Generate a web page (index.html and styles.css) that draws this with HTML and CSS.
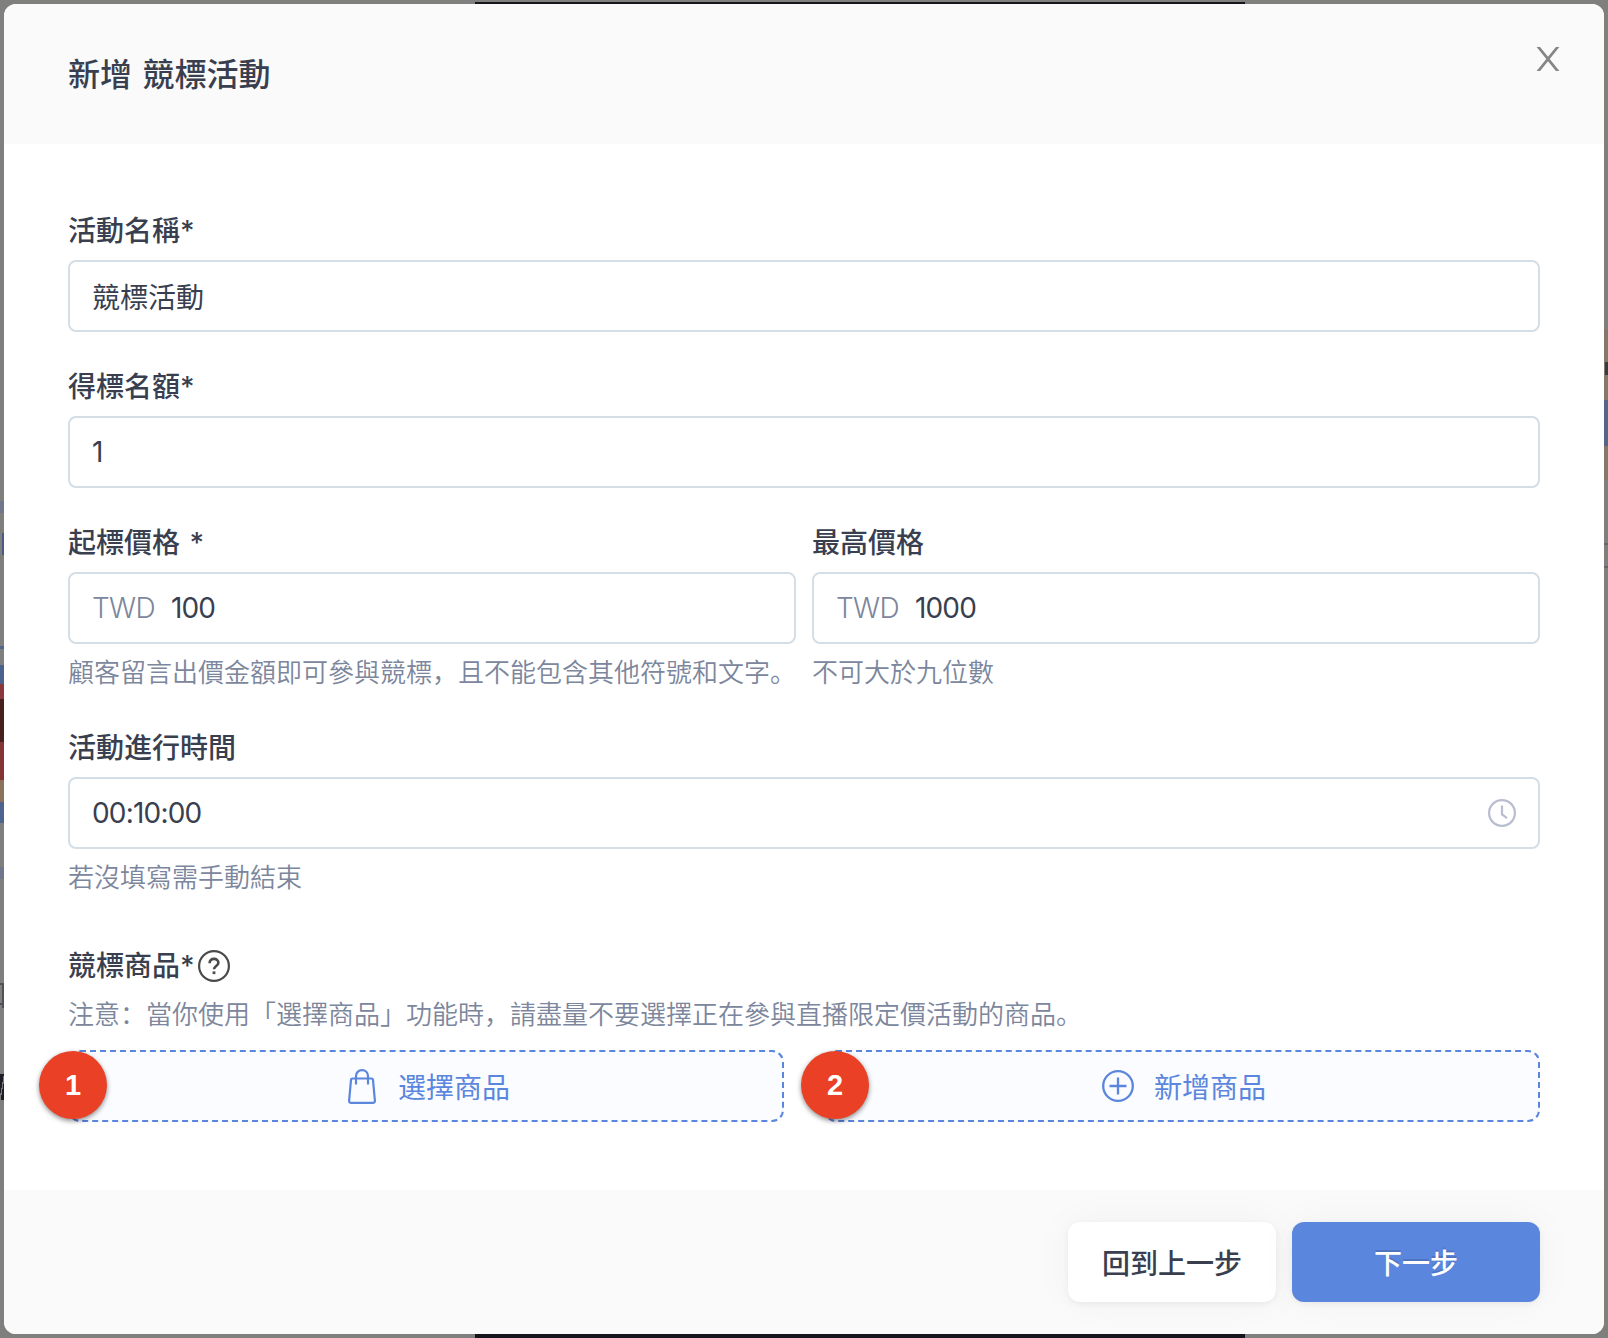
FILE: index.html
```
<!DOCTYPE html>
<html lang="zh-Hans">
<head>
  <meta charset="UTF-8" />
  <meta name="viewport" content="width=device-width, initial-scale=1" />
  <title>新增 競標活動</title>
  <link rel="stylesheet" href="styles.css">
</head>
<body>
  <div class="backdrop" aria-hidden="true"></div>

  <main class="modal" role="dialog" aria-labelledby="modal-title">
    <header class="modal-header">
      <h1 id="modal-title">新增 競標活動</h1>
      <button class="close" aria-label="關閉">
        <svg width="24" height="26" viewBox="0 0 24 26" fill="#868686">
          <path d="M.6 1h3.500L12 10.700 19.900 1h3.500L13.700 13l9.700 12h-3.500L12 15.300 4.100 25H.6l9.700-12z" />
        </svg>
      </button>
    </header>

    <form class="modal-body">
      <div class="field">
        <label for="name">活動名稱*</label>
        <div class="control"><input id="name" type="text" value="競標活動" /></div>
      </div>

      <div class="field">
        <label for="quota">得標名額*</label>
        <div class="control"><input id="quota" class="number" type="text" value="1" /></div>
      </div>

      <div class="row">
        <div class="field">
          <label for="start-price">起標價格 *</label>
          <div class="control">
            <span class="prefix">TWD</span>
            <input id="start-price" class="number" type="text" value="100" />
          </div>
          <p class="hint">顧客留言出價金額即可參與競標，且不能包含其他符號和文字。</p>
        </div>
        <div class="field">
          <label for="max-price">最高價格</label>
          <div class="control">
            <span class="prefix">TWD</span>
            <input id="max-price" class="number" type="text" value="1000" />
          </div>
          <p class="hint">不可大於九位數</p>
        </div>
      </div>

      <div class="field">
        <label for="duration">活動進行時間</label>
        <div class="control">
          <input id="duration" class="number" type="text" value="00:10:00" />
          <svg class="clock" width="28" height="28" viewBox="0 0 28 28" fill="none" stroke="#b8bdcf" stroke-width="2.2">
            <circle cx="14" cy="14" r="12.9" />
            <path d="M14 6.500v9l5 3.700" />
          </svg>
        </div>
        <p class="hint">若沒填寫需手動結束</p>
      </div>

      <section class="products">
        <div class="products-title">
          <h2>競標商品*</h2>
          <svg width="32" height="32" viewBox="0 0 32 32" fill="none" stroke="#4a4a4a" stroke-width="2.2">
            <circle cx="16" cy="16" r="14.900" />
            <path d="M11.600 13.200c0-2.700 1.900-4.300 4.400-4.300s4.400 1.600 4.400 3.900c0 3.300-4.400 3.100-4.400 6.500" stroke-width="2.600" />
            <path d="M16 21.400v2.700" stroke-width="2.800" />
          </svg>
        </div>
        <p class="note">注意：當你使用「選擇商品」功能時，請盡量不要選擇正在參與直播限定價活動的商品。</p>

        <div class="product-actions">
          <button class="dashed dashed-select" type="button">
            <svg width="28" height="35" viewBox="0 0 28 35" fill="none" stroke="#5b86dd" stroke-width="2.200" stroke-linejoin="round">
              <path d="M4.500 9.500h19a1.500 1.500 0 0 1 1.500 1.400l1.900 20.900a1.900 1.900 0 0 1-1.900 2.100H3a1.900 1.900 0 0 1-1.900-2.100L3 10.900a1.500 1.500 0 0 1 1.500-1.400z" />
              <path d="M8 15.500V7.100C8 3.700 10.500 1.200 14 1.200s6 2.500 6 5.900v8.400" />
            </svg>
            <span>選擇商品</span>
            <i class="badge">1</i>
          </button>
          <button class="dashed dashed-add" type="button">
            <svg width="32" height="32" viewBox="0 0 32 32" fill="none" stroke="#5b86dd" stroke-width="2.300">
              <circle cx="16" cy="16" r="14.800" />
              <path d="M16 7.500v17M7.500 16h17" />
            </svg>
            <span>新增商品</span>
            <i class="badge">2</i>
          </button>
        </div>
      </section>
    </form>

    <footer class="modal-footer">
      <button class="btn btn-back">回到上一步</button>
      <button class="btn btn-next">下一步</button>
    </footer>
  </main>
</body>
</html>
```
FILE: styles.css
```
*, *::before, *::after {
  box-sizing: border-box;
}

body {
  margin: 0;
  padding: 4px;
  background: #7f7f7f;
  font-family: Inter, "Noto Sans CJK SC", sans-serif;
  font-size: 28px;
  color: #393f4f;
}

h1, h2, p {
  margin: 0;
}

button, input {
  font: inherit;
  color: inherit;
  border: none;
  background: none;
  padding: 0;
}

/* dimmed page behind the dialog */
.backdrop {
  position: absolute;
  inset: 0;
  z-index: -1;
  background:
    linear-gradient(#15151b, #15151b) 475px 2px / 770px 1336px no-repeat,
    /* left edge */
    linear-gradient(#70768c 0 0) 0 501px / 4px 12px no-repeat,
    linear-gradient(#48598a 0 0) 2px 533px / 2px 22px no-repeat,
    linear-gradient(#53658f 0 0) 0 646px / 4px 3px no-repeat,
    linear-gradient(#4d618e 0 19px, #8a383b 19px 34px, #46201d 34px 77px, #853436 77px 115px, #8b725d 115px 137px, #4f6390 137px 158px) 0 665px / 4px 158px no-repeat,
    linear-gradient(#70768c 0 0) 0 867px / 4px 12px no-repeat,
    linear-gradient(#505157 0 2px, transparent 2px 20px, #505157 20px 22px) 0 983px / 4px 22px no-repeat,
    linear-gradient(#505157 0 0) 2px 983px / 2px 25px no-repeat,
    linear-gradient(100deg, #1d1e25 45%, #7b7b79 46% 60%, #1d1e25 61%) 0 1074px / 4px 26px no-repeat,
    /* right edge */
    linear-gradient(#363a41 0 0) 1605px 362px / 3px 13px no-repeat,
    linear-gradient(#86776d 0 71px, #576684 71px 117px, #86776d 117px 151px) 1604px 329px / 4px 151px no-repeat,
    linear-gradient(#65666b 0 2px, transparent 2px 23px, #65666b 23px 25px) 1604px 543px / 4px 25px no-repeat,
    #7f7f7e;
}

.modal {
  height: 1330px;
  display: flex;
  flex-direction: column;
  background: #fff;
  border-radius: 12px;
  overflow: hidden;
}

.modal-header {
  height: 140px;
  padding: 0 44px 0 64px;
  display: flex;
  justify-content: space-between;
  background: #fafafa;
}

.modal-header h1 {
  line-height: 141px;
  font-size: 32px;
  font-weight: 500;
  word-spacing: 2px;
}

.close {
  align-self: flex-start;
  margin-top: 42px;
  display: flex;
}

.modal-body {
  flex: 1;
  padding: 64px 64px 0;
}

.field {
  margin-bottom: 32px;
}

.row {
  display: grid;
  grid-template-columns: 1fr 1fr;
  gap: 16px;
}

label {
  display: block;
  height: 44px;
  margin-bottom: 8px;
  line-height: 46px;
  font-weight: 500;
  word-spacing: 2px;
}

.control {
  height: 72px;
  padding: 0 22px;
  display: flex;
  align-items: center;
  border: 2px solid #d4dee7;
  border-radius: 8px;
}

.control input {
  flex: 1;
  min-width: 0;
  height: 100%;
  outline: none;
}

.control .number {
  letter-spacing: -0.8px;
}

.prefix {
  margin-right: 16px;
  color: #7c869c;
  font-weight: 350;
  letter-spacing: -0.7px;
}

.hint,
.note {
  height: 41px;
  line-height: 41px;
  font-size: 26px;
  font-weight: 350;
  color: #7c869c;
  white-space: nowrap;
}

.hint {
  margin-top: 8px;
}

.products {
  margin-top: 46px;
}

.products-title {
  height: 44px;
  display: flex;
  align-items: center;
  gap: 3px;
}

.products-title h2 {
  font-size: 28px;
  font-weight: 500;
  line-height: 44px;
}

.note {
  margin: 6px 0 15px;
}

.product-actions {
  display: grid;
  grid-template-columns: 1fr 1fr;
  gap: 40px;
}

.dashed {
  position: relative;
  height: 72px;
  display: flex;
  align-items: center;
  justify-content: center;
  gap: 20px;
  border: 2px dashed #5b86dd;
  border-radius: 12px;
  background: #fafcff;
  color: #5b86dd;
}

.dashed-select {
  gap: 22px;
  padding-left: 6px;
}

.dashed-add {
  padding-left: 4px;
}

/* numbered step marker over the button's left edge */
.badge {
  position: absolute;
  left: -31px;
  top: -1px;
  width: 68px;
  height: 68px;
  border-radius: 50%;
  background: #ea4025;
  color: #fff;
  font: bold 29px/69px "Liberation Sans", sans-serif;
  text-align: center;
  box-shadow: 0 2px 5px rgba(0, 0, 0, 0.45);
}

.dashed-add .badge {
  left: -25px;
}

.modal-footer {
  height: 144px;
  padding: 32px 64px;
  display: flex;
  justify-content: flex-end;
  gap: 16px;
  background: #fafafa;
}

.btn {
  height: 80px;
  border-radius: 12px;
  font-weight: 500;
  box-shadow: 0 2px 6px rgba(0, 0, 0, 0.06), 0 0 40px rgba(0, 0, 0, 0.04);
}

.btn-back {
  width: 208px;
  background: #fff;
}

.btn-next {
  width: 248px;
  background: #5b86dd;
  color: #fff;
  text-shadow: 0 -2px 0 rgba(0, 0, 0, 0.12);
}
```
